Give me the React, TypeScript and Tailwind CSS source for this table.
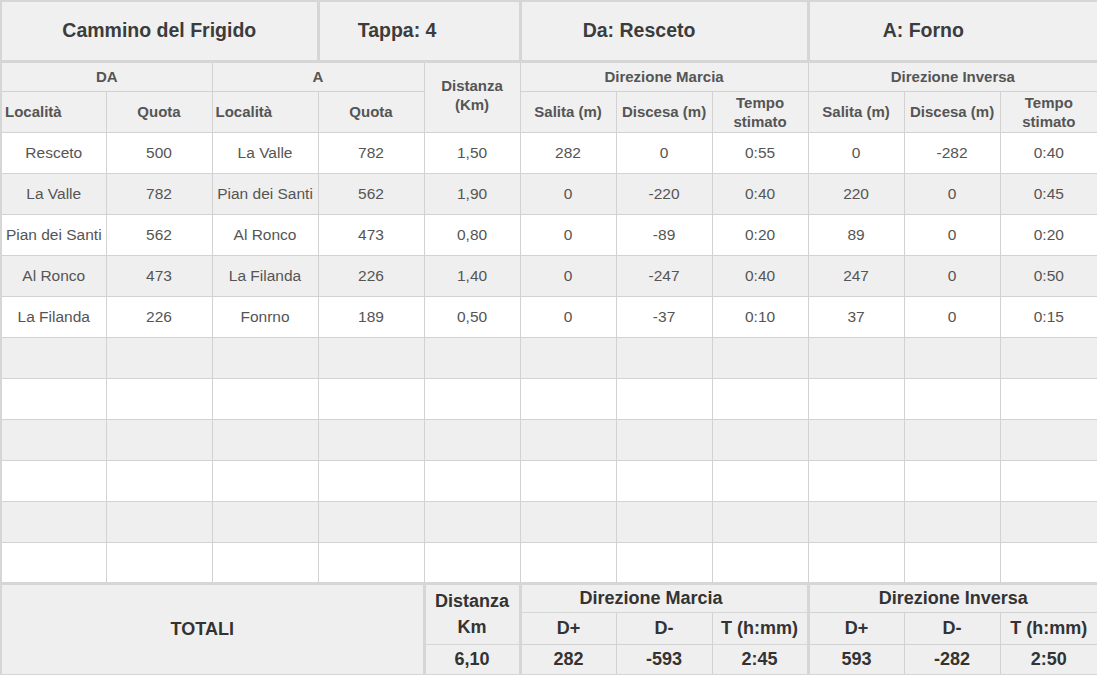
import React from "react";

const rows: string[][] = [
  ["Resceto", "500", "La Valle", "782", "1,50", "282", "0", "0:55", "0", "-282", "0:40"],
  ["La Valle", "782", "Pian dei Santi", "562", "1,90", "0", "-220", "0:40", "220", "0", "0:45"],
  ["Pian dei Santi", "562", "Al Ronco", "473", "0,80", "0", "-89", "0:20", "89", "0", "0:20"],
  ["Al Ronco", "473", "La Filanda", "226", "1,40", "0", "-247", "0:40", "247", "0", "0:50"],
  ["La Filanda", "226", "Fonrno", "189", "0,50", "0", "-37", "0:10", "37", "0", "0:15"],
];

const empty = Array.from({ length: 6 }, () => Array(11).fill(""));
const widths = [105, 106, 106, 106, 96, 96, 96, 96, 96, 96, 98];

const th = "border border-[#d2d2d2] font-bold text-[15px] leading-[19px] text-[#555] text-center";
const tot = "border border-[#d2d2d2] font-bold text-[18px] leading-[22px] text-[#333] text-center";

export default function App() {
  return (
    <div className="w-[1097px] h-[675px] bg-white" style={{ fontFamily: '"Liberation Sans", Arial, sans-serif' }}>
      <table className="w-full table-fixed border-collapse border-2 border-[#d6d6d6]">
        <colgroup>
          {widths.map((w, i) => (
            <col key={i} style={{ width: w }} />
          ))}
        </colgroup>
        <tbody>
          {/* title row */}
          <tr className="h-[60px] bg-[#f0f0f0] text-[19.5px] font-bold text-[#3c3c3c] border-b-[3px] border-[#d6d6d6]">
            <td colSpan={3} className="text-center border-r-[3px] border-[#d6d6d6]">Cammino del Frigido</td>
            <td colSpan={2} className="text-center pr-[44px] border-r-[3px] border-[#d6d6d6]">Tappa: 4</td>
            <td colSpan={3} className="text-center pr-[50px] border-r-[3px] border-[#d6d6d6]">Da: Resceto</td>
            <td colSpan={3} className="text-center pr-[60px]">A: Forno</td>
          </tr>

          {/* column groups */}
          <tr className="h-[30px] bg-[#f0f0f0]">
            <td colSpan={2} className={th}>DA</td>
            <td colSpan={2} className={th}>A</td>
            <td rowSpan={2} className={th + " align-top pt-[13px]"}>
              Distanza
              <br />
              (Km)
            </td>
            <td colSpan={3} className={th}>Direzione Marcia</td>
            <td colSpan={3} className={th}>Direzione Inversa</td>
          </tr>
          <tr className="h-[41px] bg-[#f0f0f0]">
            <td className={th + " !text-left pl-[3px]"}>Località</td>
            <td className={th}>Quota</td>
            <td className={th + " !text-left pl-[3px]"}>Località</td>
            <td className={th}>Quota</td>
            <td className={th}>Salita (m)</td>
            <td className={th}>Discesa (m)</td>
            <td className={th}>
              Tempo
              <br />
              stimato
            </td>
            <td className={th}>Salita (m)</td>
            <td className={th}>Discesa (m)</td>
            <td className={th}>
              Tempo
              <br />
              stimato
            </td>
          </tr>

          {/* body */}
          {[...rows, ...empty].map((r, i) => (
            <tr key={i} className={"h-[41px] " + (i % 2 === 0 ? "bg-white" : "bg-[#efefef]")}>
              {r.map((c, j) => (
                <td
                  key={j}
                  className="border border-[#d2d2d2] text-center text-[15.5px] text-[#555] whitespace-nowrap overflow-hidden pt-[1px]"
                >
                  {c}
                </td>
              ))}
            </tr>
          ))}

          {/* totals */}
          <tr className="h-[29px] bg-[#efefef] border-t-[3px] border-[#d6d6d6]">
            <td colSpan={4} rowSpan={3} className={tot + " pr-[20px] border-r-[3px] border-[#d6d6d6]"}>
              TOTALI
            </td>
            <td rowSpan={2} className={tot + " border-r-[3px] border-[#d6d6d6] leading-[26px]"}>
              Distanza
              <br />
              Km
            </td>
            <td colSpan={3} className={tot + " pr-[26px] border-r-[3px] border-[#d6d6d6]"}>Direzione Marcia</td>
            <td colSpan={3} className={tot}>Direzione Inversa</td>
          </tr>
          <tr className="h-[32px] bg-[#efefef]">
            <td className={tot}>D+</td>
            <td className={tot}>D-</td>
            <td className={tot + " border-r-[3px] border-[#d6d6d6]"}>T (h:mm)</td>
            <td className={tot}>D+</td>
            <td className={tot}>D-</td>
            <td className={tot}>T (h:mm)</td>
          </tr>
          <tr className="h-[31px] bg-[#efefef]">
            <td className={tot + " border-r-[3px] border-[#d6d6d6]"}>6,10</td>
            <td className={tot}>282</td>
            <td className={tot}>-593</td>
            <td className={tot + " border-r-[3px] border-[#d6d6d6]"}>2:45</td>
            <td className={tot}>593</td>
            <td className={tot}>-282</td>
            <td className={tot}>2:50</td>
          </tr>
        </tbody>
      </table>
    </div>
  );
}
